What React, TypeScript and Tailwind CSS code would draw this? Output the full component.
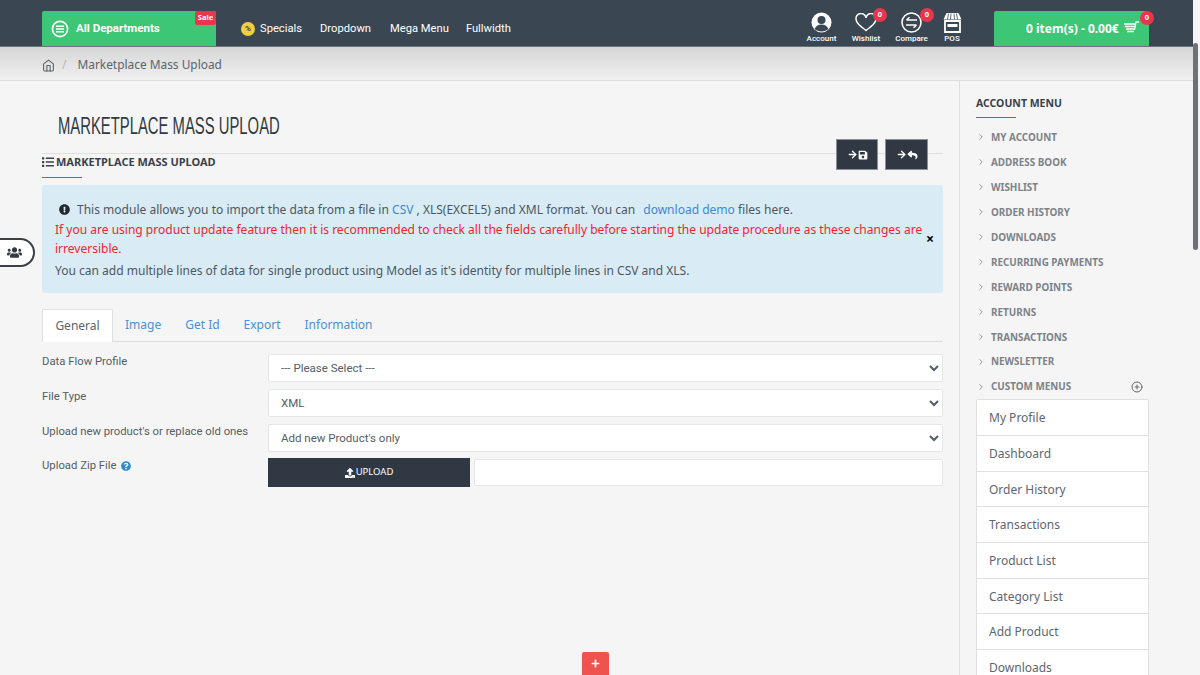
import { FaUsers, FaList, FaExclamationCircle, FaQuestionCircle, FaUpload, FaSave, FaReply, FaPlus } from "react-icons/fa";
import { FiChevronRight, FiArrowRight, FiHome, FiPlusCircle } from "react-icons/fi";

const accountLinks = [
  "MY ACCOUNT",
  "ADDRESS BOOK",
  "WISHLIST",
  "ORDER HISTORY",
  "DOWNLOADS",
  "RECURRING PAYMENTS",
  "REWARD POINTS",
  "RETURNS",
  "TRANSACTIONS",
  "NEWSLETTER",
];

const customLinks = [
  "My Profile",
  "Dashboard",
  "Order History",
  "Transactions",
  "Product List",
  "Category List",
  "Add Product",
  "Downloads",
];

function Badge({ className }: { className: string }) {
  return (
    <span className={`absolute flex h-[14px] w-[14px] items-center justify-center rounded-full bg-[#e8364f] text-[7.500px] font-bold text-white ${className}`}>
      0
    </span>
  );
}

function HeaderIcon({ label, children, width }: { label: string; children: React.ReactNode; width: string }) {
  return (
    <div className={`relative flex flex-col items-center ${width}`}>
      <div className="flex h-[24px] items-center">{children}</div>
      <span className="font-['Roboto',sans-serif] text-[8px] font-medium leading-[10px] text-white">{label}</span>
    </div>
  );
}

function Header() {
  return (
    <header className="flex h-[47px] items-end border-b border-[#6b747c] bg-[#3a4651] pl-[42px] pr-[51px]">
      <div className="relative flex h-[35px] w-[174px] items-center gap-[7px] rounded-t-[2px] bg-[#3cc675] pl-[9px]">
        <svg width="18" height="18" viewBox="0 0 18 18" fill="none" stroke="white" strokeWidth="1.6">
          <circle cx="9" cy="9" r="7.6" />
          <path d="M5 6.2h8M5 9h8M5 11.8h8" />
        </svg>
        <span className="font-['Roboto',sans-serif] text-[11.500px] font-bold text-white">All Departments</span>
        <span className="absolute right-0 top-0 flex h-[14px] w-[21px] items-center justify-center rounded-[2px] bg-[#e8364f] text-[7.500px] font-bold text-white">
          Sale
        </span>
      </div>
      <nav className="mb-[9px] ml-[25px] flex items-center font-['Roboto',sans-serif] text-[11.200px] leading-[16px] text-white">
        <span className="mr-[5px] flex h-[14px] w-[14px] items-center justify-center rounded-full bg-[#f4cf3d] text-[8px] font-bold text-[#3a4651]">%</span>
        <span className="mr-[18px]">Specials</span>
        <span className="mr-[19px]">Dropdown</span>
        <span className="mr-[17px]">Mega Menu</span>
        <span>Fullwidth</span>
      </nav>
      <div className="ml-auto mb-[2px] flex items-end">
        <HeaderIcon label="Account" width="w-[45px]">
          <svg width="21" height="21" viewBox="0 0 21 21">
            <circle cx="10.500" cy="10.500" r="10" fill="white" />
            <circle cx="10.500" cy="8" r="4" fill="#3a4651" />
            <path d="M3.500 17c1.500-3.400 4-4.600 7-4.600s5.500 1.200 7 4.600c-3.600 3.200-10.400 3.200-14 0z" fill="#3a4651" />
          </svg>
        </HeaderIcon>
        <HeaderIcon label="Wishlist" width="w-[44px]">
          <svg width="22" height="19" viewBox="0 0 22 19" fill="none" stroke="white" strokeWidth="1.500">
            <path d="M11 17.500C5 13 1 10 1 6a5 5 0 0 1 10-1 5 5 0 0 1 10 1c0 4-4 7-10 11.500z" />
          </svg>
          <Badge className="right-[1px] top-[-2px]" />
        </HeaderIcon>
        <HeaderIcon label="Compare" width="w-[47px]">
          <svg width="21" height="21" viewBox="0 0 21 21" fill="none" stroke="white" strokeWidth="1.400">
            <circle cx="10.500" cy="10.500" r="9.500" strokeWidth="1.600" />
            <path d="M5.500 8H16M5.500 8l3-2.800M15.500 13H5M15.500 13l-3 2.800" strokeWidth="1.500" />
          </svg>
          <Badge className="right-[1px] top-[-2px]" />
        </HeaderIcon>
        <HeaderIcon label="POS" width="w-[34px]">
          <svg width="19" height="21" viewBox="0 0 19 21">
            <path d="M3.500 1h12l3 6.500H.500z" fill="white" />
            <path d="M5.500 1.500L4.500 7.500M8 1.500L7.500 7.500M11 1.500L11.500 7.500M13.500 1.500L14.500 7.500" stroke="#3a4651" strokeWidth=".8" />
            <path d="M2 9h15v11H2z" fill="none" stroke="white" strokeWidth="1.800" />
            <path d="M4.500 12h10v3h-10z" fill="white" />
          </svg>
        </HeaderIcon>
      </div>
      <div className="relative ml-[25px] flex h-[35px] w-[155px] items-center rounded-t-[2px] bg-[#3cc675] pl-[32px]">
        <span className="text-[12px] font-bold text-white">0 item(s) - 0.00€</span>
        <svg className="ml-[5px] mb-[3px]" width="15" height="13" viewBox="0 0 15 13" fill="none" stroke="white" strokeWidth="1.300">
          <path d="M0 3h11M1 5.500h9.500M2 8h8M3 10.500h7M10.500 9l1.500-8h3" />
        </svg>
        <Badge className="right-[-5px] top-0" />
      </div>
    </header>
  );
}

function Breadcrumb() {
  return (
    <div className="flex h-[34px] items-center border-b border-[#dedede] bg-gradient-to-b from-[#d6d6d6] to-[#f0f0f0] pl-[42px] pt-[3px] text-[11.900px] text-[#59636d]">
      <FiHome className="h-[13px] w-[13px]" />
      <span className="ml-[7px] mr-[11px] text-[#b5b5b5]">/</span>
      <span>Marketplace Mass Upload</span>
    </div>
  );
}

function Label({ children }: { children: React.ReactNode }) {
  return <div className="w-[226px] font-['Roboto',sans-serif] text-[11.300px] leading-[16px] text-[#555d66]">{children}</div>;
}

function Field({ label, value }: { label: string; value: string }) {
  return (
    <div className="mb-[7px] flex">
      <Label>{label}</Label>
      <select className="h-[28px] flex-1 rounded-[2px] border border-[#e6e6e6] bg-white pl-[8px] font-['Roboto',sans-serif] text-[11.500px] text-[#555d66]" defaultValue={value}>
        <option>{value}</option>
      </select>
    </div>
  );
}

function Main() {
  return (
    <main className="w-[917px] shrink-0">
      <h1 className="ml-[16px] origin-left scale-x-[0.645] pt-[32px] font-['Liberation_Sans',sans-serif] text-[23px] leading-[26px] whitespace-nowrap text-[#303a45]">
        MARKETPLACE MASS UPLOAD
      </h1>
      <div className="mt-[14px] flex w-[901px] items-start justify-between border-t border-[#dfdfdf]">
        <div className="pt-[1px]">
          <div className="flex items-center gap-[2px] text-[11px] font-bold leading-[14px] text-[#39424c]">
            <FaList className="h-[12px] w-[12px]" />
            MARKETPLACE MASS UPLOAD
          </div>
          <div className="mt-[8px] h-[1px] w-[40px] bg-[#e8364f]" />
        </div>
        <div className="mr-[15px] mt-[-15px] flex gap-[7px]">
          <button className="flex h-[31px] w-[42px] items-center justify-center border border-[#8b9096] bg-[#2f3843] text-white">
            <FiArrowRight className="h-[11px] w-[11px]" strokeWidth={3} />
            <FaSave className="h-[10px] w-[10px]" />
          </button>
          <button className="flex h-[31px] w-[43px] items-center justify-center border border-[#8b9096] bg-[#2f3843] text-white">
            <FiArrowRight className="h-[11px] w-[11px]" strokeWidth={3} />
            <FaReply className="h-[10px] w-[11px]" />
          </button>
        </div>
      </div>
      <div className="relative mt-[7px] h-[108px] w-[901px] rounded-[3px] bg-[#d9ecf6] px-[13px] pt-[15px] text-[12.030px] leading-[19.500px] text-[#4d5761]">
        <div className="flex items-center">
          <FaExclamationCircle className="ml-[4px] mr-[7px] h-[11px] w-[11px] text-[#23272b]" />
          <span>
            This module allows you to import the data from a file in <span className="text-[#3f86d6]">CSV</span> , XLS(EXCEL5) and XML format. You can <span className="ml-[5px] text-[#3f86d6]">download demo</span> files here.
          </span>
        </div>
        <div className="text-[#f5222d]">
          If you are using product update feature then it is recommended to check all the fields carefully before starting the update procedure as these changes are irreversible.
        </div>
        <div className="mt-[2px]">You can add multiple lines of data for single product using Model as it's identity for multiple lines in CSV and XLS.</div>
        <span className="absolute right-[9px] top-[47px] text-[14px] font-bold leading-[14px] text-black">×</span>
      </div>
      <div className="mt-[16px] flex h-[33px] w-[901px] border-b border-[#dedede] text-[12px] text-[#4a90d9]">
        <div className="mb-[-1px] flex h-[33px] w-[71px] items-center justify-center border border-b-0 border-[#e2e2e2] bg-white text-[#59636d]">General</div>
        <div className="ml-[12px] flex items-center">Image</div>
        <div className="ml-[24px] flex items-center">Get Id</div>
        <div className="ml-[24px] flex items-center">Export</div>
        <div className="ml-[24px] flex items-center">Information</div>
      </div>
      <div className="mt-[12px] w-[901px]">
        <Field label="Data Flow Profile" value="--- Please Select ---" />
        <Field label="File Type" value="XML" />
        <Field label="Upload new product's or replace old ones" value="Add new Product's only" />
        <div className="mt-[-1px] flex">
          <Label>
            Upload Zip File
            <FaQuestionCircle className="ml-[4px] inline h-[10px] w-[10px] text-[#2e87c8]" />
          </Label>
          <button className="flex h-[29px] w-[202px] items-center justify-center gap-[1px] bg-[#2f3843] text-[9.500px] text-white">
            <FaUpload className="h-[10px] w-[10px]" />
            UPLOAD
          </button>
          <div className="ml-[4px] mt-[1px] h-[27px] flex-1 rounded-[2px] border border-[#e6e6e6] bg-white" />
        </div>
      </div>
    </main>
  );
}

function Sidebar() {
  return (
    <aside className="w-[234px] shrink-0 border-l border-[#dedede] pl-[16px] pr-[44px] pt-[15px]">
      <div className="text-[10.500px] font-bold leading-[14px] text-[#39424c]">ACCOUNT MENU</div>
      <div className="mt-[7px] h-[1px] w-[40px] bg-[#e8364f]" />
      <ul className="mt-[7px]">
        {accountLinks.map((link) => (
          <li key={link} className="flex h-[24.950px] items-center text-[9.900px] font-bold text-[#7c838b]">
            <FiChevronRight className="mr-[5px] h-[10px] w-[10px] text-[#8c8c8c]" />
            {link}
          </li>
        ))}
        <li className="flex h-[24.950px] items-center pr-[6px] text-[9.900px] font-bold text-[#7c838b]">
          <FiChevronRight className="mr-[5px] h-[10px] w-[10px] text-[#8c8c8c]" />
          CUSTOM MENUS
          <FiPlusCircle className="ml-auto h-[12px] w-[12px] text-[#666]" />
        </li>
      </ul>
      <div className="rounded-t-[2px] border border-[#e0e0e0] bg-white">
        {customLinks.map((link) => (
          <div key={link} className="flex h-[35.700px] items-center border-b border-[#e0e0e0] pl-[12px] pt-[1px] text-[12px] text-[#5e6670]">
            {link}
          </div>
        ))}
      </div>
    </aside>
  );
}

export default function App() {
  return (
    <div className="relative h-[675px] w-[1200px] overflow-hidden bg-[#f5f5f5] font-['Noto_Sans','Open_Sans',sans-serif]">
      <Header />
      <Breadcrumb />
      <div className="flex pl-[42px]">
        <Main />
        <Sidebar />
      </div>
      {/* floating bits */}
      <div className="absolute left-[-10px] top-[238px] flex h-[29px] w-[45px] items-center justify-center rounded-r-full border-2 border-[#3a4148] bg-white pl-[4px] text-[#333a42]">
        <FaUsers className="h-[15px] w-[15px]" />
      </div>
      <div className="absolute left-[582px] top-[652px] flex h-[23px] w-[27px] items-center justify-center rounded-t-[2px] bg-[#ef5350] text-white">
        <FaPlus className="h-[9px] w-[9px]" />
      </div>
      <div className="absolute right-0 top-0 h-[675px] w-[7px] bg-[#f5f5f5]">
        <div className="mt-[43px] h-[207px] w-[5px] rounded-[3px] bg-[#6e7278]" />
      </div>
    </div>
  );
}
